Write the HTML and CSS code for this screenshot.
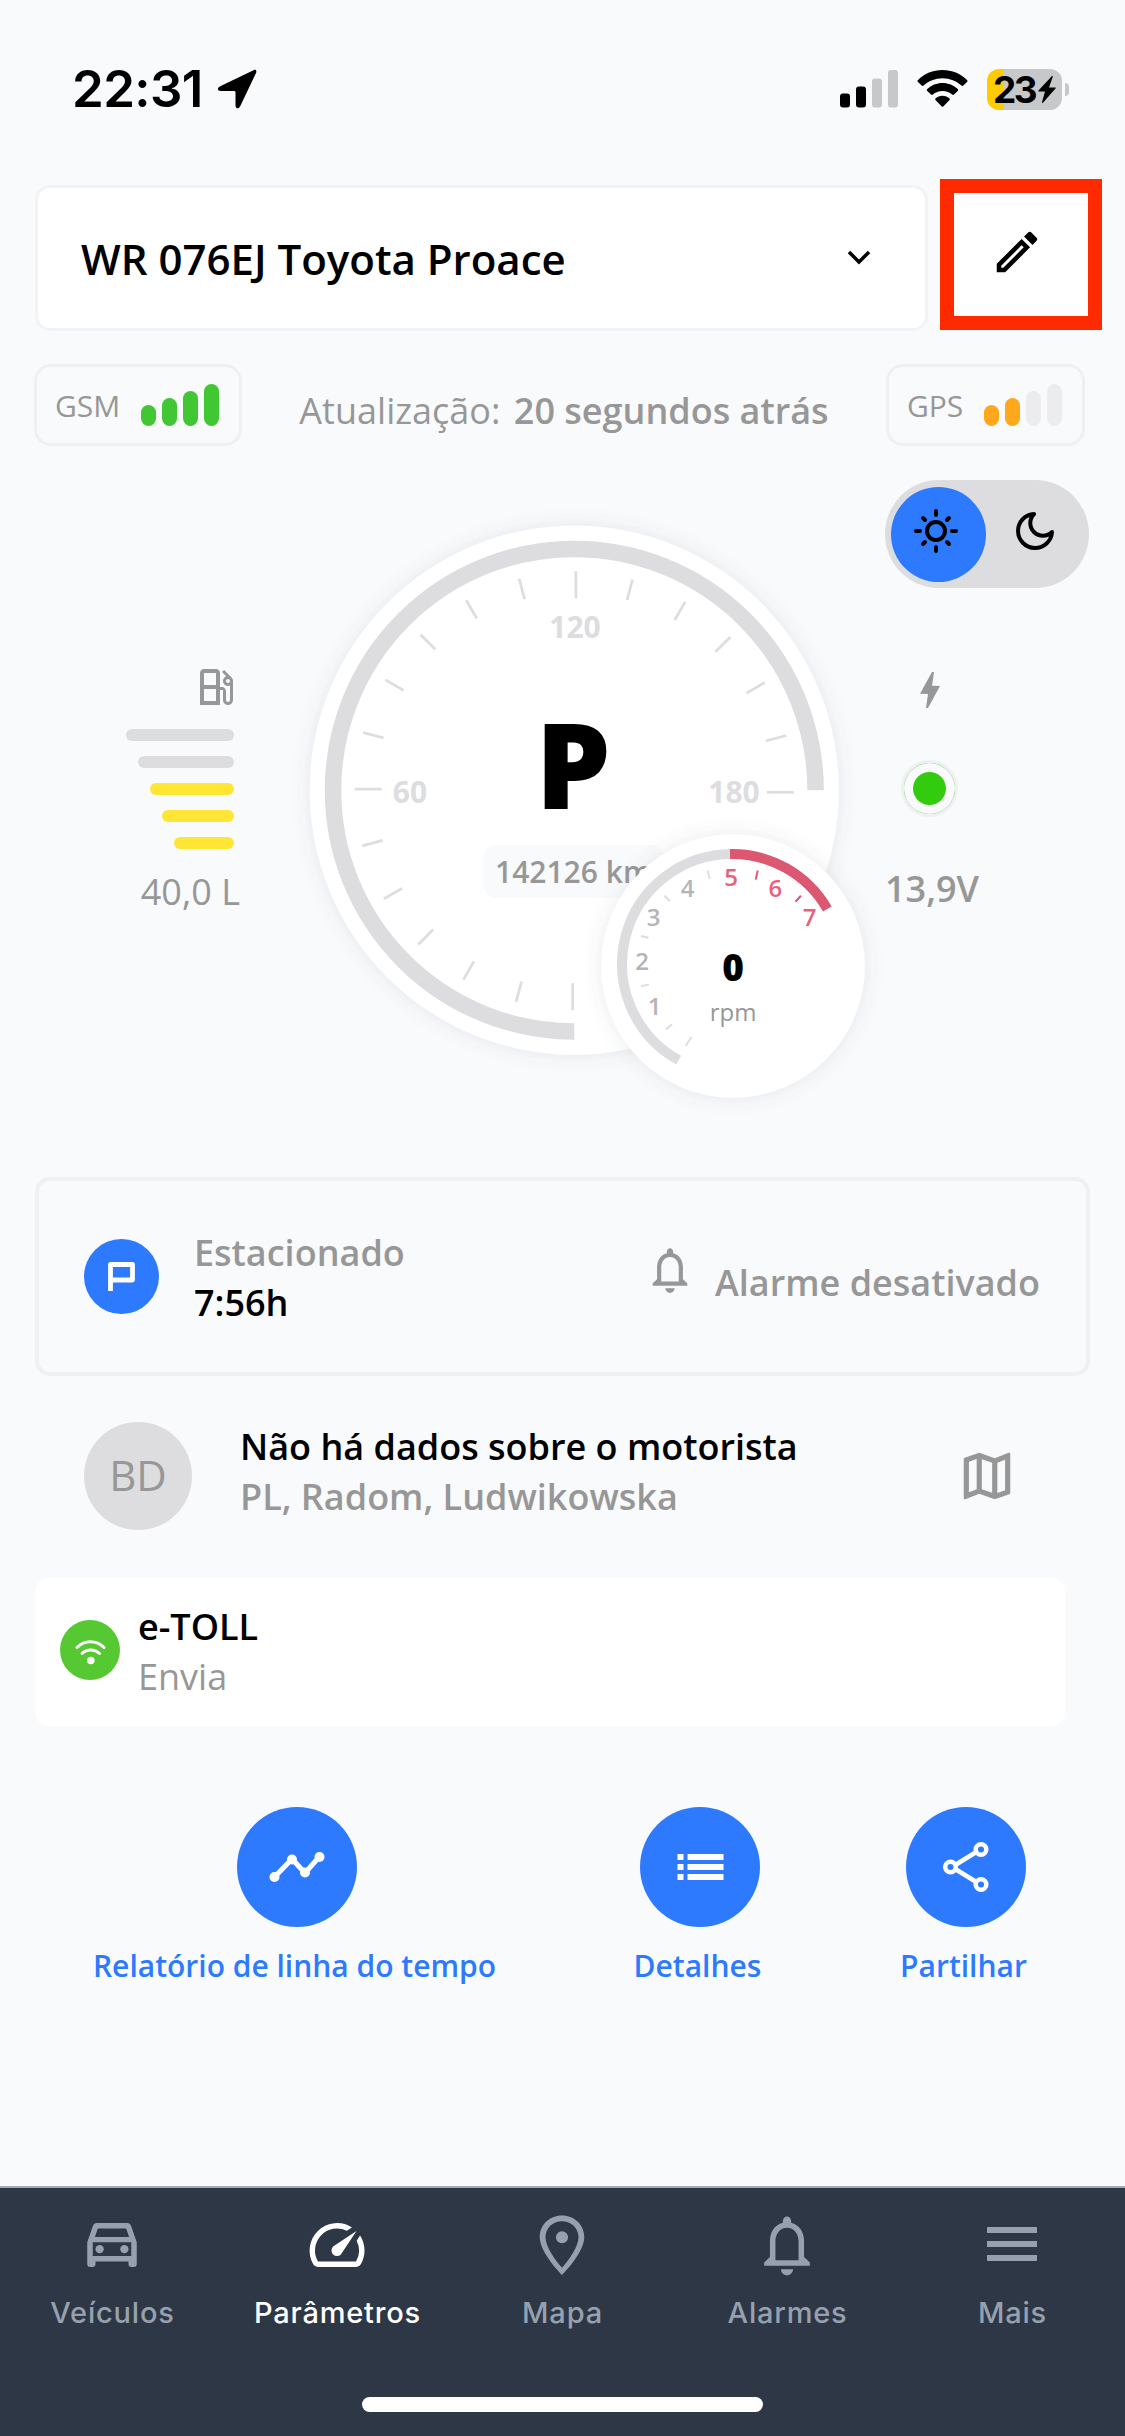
FILE: index.html
```html
<!DOCTYPE html>
<html lang="pt">
<head>
<meta charset="utf-8">
<title>Parâmetros</title>
<link rel="stylesheet" href="styles.css">
</head>
<body>
<div class="screen">
  <header class="status-bar">
    <div class="status-left">
      <span class="clock">22:31</span>
      <svg class="location" viewBox="0 0 40 40"><path d="M36.500 1.200 3.200 17.200c-3.500 1.800-2.700 4.800.500 4.800H17c1 0 1.500.500 1.500 1.500V36c0 4 3.200 4.500 4.800 1L39 4c1-2.500-.200-3.800-2.500-2.800z"/></svg>
    </div>
    <div class="status-right">
      <svg class="cell" viewBox="0 0 58 38"><rect x="0" y="23.500" width="10" height="14" rx="3"/><rect x="16" y="16.500" width="10" height="21" rx="3"/><rect class="dim" x="32" y="8.500" width="10" height="29" rx="3"/><rect class="dim" x="48" y="0" width="10" height="37.500" rx="3"/></svg>
      <svg class="wifi" viewBox="0 0 51 38"><path d="M25.500 0C35 0 43.700 3.700 50 9.900c.700.700.700 1.300 0 2l-3.700 3.700c-.600.600-1.300.600-1.900 0C39.500 11 32.900 8.200 25.500 8.200S11.500 11 6.600 15.600c-.600.600-1.300.600-1.900 0L1 11.900c-.700-.700-.700-1.300 0-2C7.300 3.700 16 0 25.500 0z"/><path d="M25.500 12.900c5.900 0 11.200 2.300 15.200 6 .700.700.700 1.300 0 2L37 24.600c-.600.600-1.200.600-1.900 0-2.500-2.200-5.900-3.600-9.600-3.600s-7.100 1.400-9.600 3.600c-.700.600-1.300.600-1.900 0l-3.700-3.700c-.700-.700-.700-1.300 0-2 4-3.700 9.300-6 15.200-6z"/><path d="M25.500 25.700c2.700 0 5 1 6.800 2.500.700.600.700 1.300 0 2l-5.800 6.100c-.700.700-1.300.700-2 0L18.700 30.200c-.700-.700-.700-1.400 0-2 1.800-1.500 4.100-2.500 6.800-2.500z"/></svg>
      <div class="battery"><div class="battery-body"><span>23</span><svg viewBox="0 0 18 27"><path d="M13.500.500.500 14.500c-.500.600-.300 1.100.500 1.100h6L4 26c-.200 1 .500 1.300 1.200.600L17.500 12.500c.500-.600.300-1.100-.500-1.100h-6L14.700 1.100c.300-1-.500-1.300-1.200-.600z"/></svg></div><i></i></div>
    </div>
  </header>

  <div class="top-row">
    <div class="vehicle-select"><span>WR 076EJ Toyota Proace</span>
      <svg class="chevron" viewBox="0 0 24 16"><path d="m2 3 10 10L22 3"/></svg></div>
    <div class="edit"><svg viewBox="0 0 24 24"><path d="m14.060 9.020.920.920L5.920 19H5v-.920l9.060-9.060M17.660 3c-.250 0-.510.100-.700.290l-1.830 1.830 3.750 3.750 1.830-1.830c.390-.390.390-1.020 0-1.410l-2.340-2.340c-.200-.200-.450-.290-.710-.290zm-3.600 3.190L3 17.250V21h3.750L17.810 9.940l-3.750-3.750z"/></svg></div>
  </div>

  <div class="signal-row">
    <div class="signal green"><span>GSM</span><div class="bars"><i class="b1 on"></i><i class="b2 on"></i><i class="b3 on"></i><i class="b4 on"></i></div></div>
    <div class="update">Atualização: <b>20 segundos atrás</b></div>
    <div class="signal orange"><span>GPS</span><div class="bars"><i class="b1 on"></i><i class="b2 on"></i><i class="b3"></i><i class="b4"></i></div></div>
  </div>

  <main class="dashboard">
    <section class="fuel">
      <svg class="icon48" viewBox="0 0 24 24"><path d="m19.770 7.230.010-.010-3.720-3.720L15 4.560l2.110 2.110c-.940.360-1.610 1.260-1.610 2.330 0 1.380 1.120 2.500 2.500 2.500.360 0 .690-.080 1-.210v7.210c0 .550-.450 1-1 1s-1-.450-1-1V14c0-1.100-.900-2-2-2h-1V5c0-1.100-.900-2-2-2H6c-1.100 0-2 .900-2 2v16h10v-7.500h1.500v5c0 1.380 1.120 2.500 2.500 2.500s2.500-1.120 2.500-2.500V9c0-.690-.280-1.320-.730-1.770zM12 19H6v-6h6v6zm0-8H6V5h6v6zm6-1c-.550 0-1-.450-1-1s.450-1 1-1 1 .450 1 1-.450 1-1 1z"/></svg>
      <div class="levels"><i class="l5"></i><i class="l4"></i><i class="l3 full"></i><i class="l2 full"></i><i class="l1 full"></i></div>
      <span class="reading">40,0 L</span>
    </section>

    <svg class="gauge" viewBox="290 500 600 630">
      <defs>
        <filter id="shade" x="-20%" y="-20%" width="140%" height="140%"><feDropShadow dx="0" dy="0" stdDeviation="9" flood-color="#5a6070" flood-opacity=".13"/></filter>
        <path id="minor" d="M1.600-219V-198"/><path id="major" d="M1.600-219.500V-192.500"/>
      </defs>
      <circle class="face" cx="574.300" cy="790.200" r="264.500"/>
      <path class="track" d="M574.300 1031.500A241.300 241.300 0 1 1 815.600 790.200"/>
      <g class="ticks" transform="translate(574.300 790.700)">
        <use href="#major" transform="rotate(180)"/><use href="#minor" transform="rotate(195)"/><use href="#minor" transform="rotate(210)"/><use href="#minor" transform="rotate(225)"/><use href="#minor" transform="rotate(240)"/><use href="#minor" transform="rotate(255)"/>
        <use href="#major" transform="rotate(270)"/><use href="#minor" transform="rotate(285)"/><use href="#minor" transform="rotate(300)"/><use href="#minor" transform="rotate(315)"/><use href="#minor" transform="rotate(330)"/><use href="#minor" transform="rotate(345)"/>
        <use href="#major"/><use href="#minor" transform="rotate(15)"/><use href="#minor" transform="rotate(30)"/><use href="#minor" transform="rotate(45)"/><use href="#minor" transform="rotate(60)"/><use href="#minor" transform="rotate(75)"/><use href="#major" transform="rotate(90)"/>
      </g>
      <g class="speed"><text x="575" y="638">120</text><text x="410" y="803">60</text><text x="734" y="803">180</text></g>
      <text class="gear" x="573" y="808.500">P</text>
      <rect class="pill" x="483" y="845" width="182" height="53" rx="14"/>
      <text class="odometer" x="495" y="883">142126 km</text>
      <circle class="face" cx="733" cy="966" r="131.800"/>
      <path class="rpm-track" d="M678.700 1060.200A110 110 0 0 1 732 854"/>
      <path class="rpm-track red" d="M730 854A110 110 0 0 1 827.300 909"/>
      <path class="rpm-ticks" d="M691.500 1037l-5.800 8.700M672 1024.300l-6.200 5.200M649 984.400l-8 2M648.600 937.700l-7.600-1.700M670 901.300l-5.700-5.500M709.800 878.800l-2.300-8.300"/>
      <path class="rpm-ticks red" d="M755.700 879.600l2-9.100M795.500 901.700l5.400-5.900"/>
      <g class="rpm-labels"><text x="654.700" y="1015">1</text><text x="642" y="970">2</text><text x="653.600" y="925.500">3</text><text x="687.600" y="896.600">4</text><g class="redline"><text x="731" y="886">5</text><text x="775.300" y="897.400">6</text><text x="809.500" y="925.500">7</text></g></g>
      <text class="rpm" x="733" y="980.500">0</text>
      <text class="unit" x="733" y="1021">rpm</text>
    </svg>

    <section class="power">
      <div class="mode">
        <div class="mode-on"><svg class="sun" viewBox="-24 -24 48 48"><circle r="9"/><path d="M0-20v4M0 16v4M-20 0h4M16 0h4M-13-13l2 2M11 11l2 2M-13 13l2-2M11-11l2-2"/></svg></div>
        <svg class="moon" viewBox="0 0 40 40"><path d="M19 3A17 17 0 1 0 37 21 11.500 11.500 0 0 1 19 3z"/></svg>
      </div>
      <svg class="bolt" viewBox="0 0 20 36"><path d="M14 0 12 13.700l8 .300L8 36H6l2-14-8-.300L12 0z"/></svg>
      <span class="led"></span>
      <span class="reading">13,9V</span>
    </section>
  </main>

  <section class="parking">
    <div class="round-p"><svg viewBox="0 0 27 30"><path d="M2.500 29V2.500h22v15.500H2.500"/></svg></div>
    <div class="two-line"><span class="grey medium">Estacionado</span><span class="medium">7:56h</span></div>
    <svg class="bell" viewBox="0 0 24 24"><use href="#bell-shape"/></svg>
    <span class="alarm grey medium">Alarme desativado</span>
  </section>

  <section class="driver">
    <div class="avatar">BD</div>
    <div class="two-line"><span class="medium">Não há dados sobre o motorista</span><span class="grey medium">PL, Radom, Ludwikowska</span></div>
    <svg class="map" viewBox="0 0 24 24"><path d="M20.500 3l-.160.030L15 5.100 9 3 3.360 4.900c-.210.070-.360.250-.360.480V20.500c0 .280.220.500.500.500l.160-.030L9 18.900l6 2.100 5.640-1.900c.210-.070.360-.250.360-.480V3.500c0-.280-.220-.500-.500-.500zM10 5.470l4 1.400v11.660l-4-1.400V5.470zm-5 .990 3-1.010v11.700l-3 1.160V6.460zm14 11.080-3 1.010V6.860l3-1.160v11.840z"/></svg>
  </section>

  <section class="toll">
    <div class="toll-icon"><svg viewBox="0 0 60 60"><path d="M17 27.500a19 19 0 0 1 27 0M22 33.500a12.500 12.500 0 0 1 17.500 0"/><circle cx="30.800" cy="40.500" r="3.800"/></svg></div>
    <div class="two-line"><span class="medium">e-TOLL</span><span class="grey">Envia</span></div>
  </section>

  <section class="actions">
    <div class="action"><div class="disc"><svg viewBox="0 0 120 120"><path class="thick" d="M37.500 70 55 52l13 14 15-17"/><circle cx="37.500" cy="70" r="5"/><circle cx="55" cy="52.500" r="5"/><circle cx="68" cy="65.500" r="5"/><circle cx="82.500" cy="50" r="5"/></svg></div><span>Relatório de linha do tempo</span></div>
    <div class="action"><div class="disc"><svg viewBox="0 0 120 120"><path d="M37.500 47h6v6h-6zM47.500 47h36v6h-36zM37.500 57h6v6h-6zM47.500 57h36v6h-36zM37.500 67h6v6h-6zM47.500 67h36v6h-36z"/></svg></div><span>Detalhes</span></div>
    <div class="action"><div class="disc"><svg viewBox="0 0 120 120"><g class="outline"><path d="M50 57.500 69.500 45.500M50 62.500l19.500 12"/><circle cx="44.500" cy="60" r="5.300"/><circle cx="75" cy="42.500" r="5.300"/><circle cx="75" cy="77.500" r="5.300"/></g></svg></div><span>Partilhar</span></div>
  </section>

  <nav class="tabs">
    <div class="tab-row">
    <div class="tab"><svg viewBox="0 0 24 24"><path d="M18.920 5.010C18.720 4.420 18.160 4 17.500 4h-11c-.660 0-1.210.420-1.420 1.010L3 11v8c0 .550.450 1 1 1h1c.550 0 1-.450 1-1v-1h12v1c0 .550.450 1 1 1h1c.550 0 1-.450 1-1v-8l-2.080-5.990zM6.850 6h10.290l1.080 3.110H5.770L6.850 6zM19 16H5v-5h14v5z"/><circle cx="7.500" cy="13.500" r="1.500"/><circle cx="16.500" cy="13.500" r="1.500"/></svg><span>Veículos</span></div>
    <div class="tab active"><svg viewBox="0 0 24 24"><path d="m20.380 8.570-1.230 1.850a8 8 0 0 1-.220 7.580H5.070A8 8 0 0 1 15.580 6.850l1.850-1.230A10 10 0 0 0 3.350 19a2 2 0 0 0 1.720 1h13.850a2 2 0 0 0 1.740-1 10 10 0 0 0-.270-10.440z"/><path d="M10.590 15.410a2 2 0 0 0 2.830 0l5.660-8.490-8.490 5.660a2 2 0 0 0 0 2.830z"/></svg><span>Parâmetros</span></div>
    <div class="tab"><svg class="pin" viewBox="0 0 24 24"><path d="M12 1.300C7.400 1.300 3.900 4.800 3.900 9.200c0 5.700 8.100 13.700 8.100 13.700s8.100-8 8.100-13.700c0-4.400-3.500-7.900-8.100-7.900zm0 19c-2.400-2.700-6-7.600-6-11.100 0-3.300 2.600-5.800 6-5.800s6 2.500 6 5.800c0 3.500-3.600 8.400-6 11.100z"/><circle cx="12" cy="9.200" r="2.200"/></svg><span>Mapa</span></div>
    <div class="tab"><svg viewBox="0 0 24 24"><path id="bell-shape" d="M12 23c1.200 0 2.200-1 2.200-2.200H9.800C9.800 22 10.800 23 12 23zm6.200-6.600v-5.800c0-3.300-1.700-6-4.700-6.700v-.700c0-.900-.700-1.600-1.500-1.600s-1.500.700-1.500 1.600v.700c-3 .700-4.700 3.400-4.700 6.700v5.800L3.700 18.400v1.100h16.600v-1.100l-2.100-2zM16.200 17.500H7.800v-6.900c0-2.700 1.700-4.900 4.200-4.900s4.200 2.200 4.200 4.900v6.900z"/></svg><span>Alarmes</span></div>
    <div class="tab"><svg viewBox="0 0 48 48"><path d="M-1 7h50v6H-1zM-1 21h50v6H-1zM-1 35h50v6H-1z"/></svg><span>Mais</span></div>
    </div>
    <div class="home"></div>
  </nav>
</div>
</body>
</html>
```
FILE: styles.css
```css
* { box-sizing: border-box; }
body { margin: 0; background: #f9fafc; color: #000; font-family: "Open Sans", "Noto Sans", sans-serif; }
svg { display: block; flex: none; overflow: visible; }
.screen { width: 1125px; height: 2436px; display: flex; flex-direction: column; background: #f9fafc; overflow: hidden; white-space: nowrap; }

.status-bar { height: 179px; padding: 58px 56px 0 72px; display: flex; justify-content: space-between; align-items: flex-start; }
.status-left, .status-right { display: flex; align-items: center; height: 62px; }
.clock { font: 600 51px/62px Inter, sans-serif; letter-spacing: -.600px; }
.location { width: 40px; height: 40px; margin-left: 14px; }
.cell { width: 58px; height: 38px; }
.cell .dim { fill: #c7c8ca; }
.wifi { width: 51px; height: 38px; margin-left: 19px; }
.battery { display: flex; align-items: center; margin-left: 19px; }
.battery-body { width: 75px; height: 41px; border-radius: 12px; background: linear-gradient(90deg, #ffcc00 17px, #c7c8ca 17px); display: flex; align-items: center; justify-content: center; gap: 2px; font: 700 37px/41px Inter, sans-serif; letter-spacing: -2.500px; }
.battery-body svg { width: 18px; height: 27px; margin-left: 1px; }
.battery > i { width: 4px; height: 13px; margin-left: 3px; border-radius: 0 4px 4px 0; background: #c7c8ca; }

.top-row { display: flex; align-items: flex-start; gap: 12px; padding-left: 35px; height: 151px; }
.vehicle-select { margin-top: 6px; width: 893px; height: 146px; border: 3px solid #f2f3f5; border-radius: 15px; background: #fff; display: flex; align-items: center; justify-content: space-between; padding: 0 54px 0 43px; font-size: 42px; font-weight: 600; }
.chevron { width: 24px; height: 16px; fill: none; stroke: #000; stroke-width: 3.500; margin-top: -3px; }
.edit { width: 162px; height: 151px; border: 14px solid #ff2a00; background: #fff; display: flex; align-items: center; justify-content: center; }
.edit svg { width: 54px; height: 54px; margin: -6px 8px 0 0; }

.signal-row { margin-top: 34px; padding: 0 40px 0 34px; height: 82px; display: flex; justify-content: space-between; }
.signal { height: 82px; border: 3px solid #eff0f2; border-radius: 17px; display: flex; align-items: center; justify-content: space-between; padding: 0 20px 0 18px; color: #979797; font-size: 30px; }
.signal.green { width: 208px; } .signal.orange { width: 199px; }
.bars { display: flex; align-items: flex-end; gap: 6.300px; height: 42px; }
.bars i { width: 14.700px; border-radius: 8px; background: #ececee; }
.green .on { background: #40c733; } .orange .on { background: #ffa81c; }
.b1 { height: 21px; } .b2 { height: 28px; } .b3 { height: 35px; } .b4 { height: 42px; }
.update { font-size: 36px; line-height: 50px; margin-top: 22px; color: #979797; }
.update b { font-weight: 600; margin-left: 4px; }

.dashboard { height: 731px; display: flex; align-items: flex-start; }
.fuel { width: 290px; padding: 217px 50px 0 0; display: flex; flex-direction: column; align-items: flex-end; }
.icon48 { width: 48px; height: 48px; fill: #979797; }
.levels { margin: 18px 6px 0 0; display: flex; flex-direction: column; align-items: flex-end; gap: 15px; }
.levels i { height: 12px; border-radius: 6px; background: #dddddf; }
.levels .full { background: #ffe534; }
.l5 { width: 108px; } .l4 { width: 96px; } .l3 { width: 84px; } .l2 { width: 72px; } .l1 { width: 60px; }
.reading { color: #979797; font-size: 36px; line-height: 50px; }
.fuel .reading { margin-top: 18px; }
.gauge { width: 600px; height: 630px; margin-top: 54px; }
.gauge text { text-anchor: middle; }
.face { fill: #fff; filter: url(#shade); }
.track, .rpm-track, .ticks, .rpm-ticks { fill: none; stroke: #dddddf; }
.track { stroke-width: 16.500px; } .rpm-track { stroke-width: 10px; }
.ticks { stroke-width: 2.700px; } .rpm-ticks { stroke-width: 2px; }
.gauge .red { stroke: #dc5772; }
.speed { fill: #dddddf; font-size: 30px; font-weight: 700; }
.gear { font-size: 119px; font-weight: 800; }
.pill { fill: #f9fafc; }
.gauge .odometer { text-anchor: start; fill: #979797; font-size: 30px; font-weight: 600; }
.rpm-labels { fill: #b5b5b5; font-size: 24px; font-weight: 600; }
.redline { fill: #eb5f7b; }
.rpm { font-size: 37px; font-weight: 800; }
.unit { font-size: 24px; fill: #979797; }
.power { width: 235px; padding: 34px 36px 0 0; margin-left: -5px; display: flex; flex-direction: column; align-items: flex-start; }
.mode { width: 204px; height: 108px; border-radius: 54px; background: #dddddf; display: flex; align-items: center; padding-left: 6px; }
.mode-on { width: 95px; height: 95px; border-radius: 50%; background: #2e7aff; display: flex; align-items: center; justify-content: center; }
.sun { width: 48px; height: 48px; margin: -6px 6px 0 0; fill: none; stroke: #000; stroke-width: 4; stroke-linecap: round; }
.moon { width: 40px; height: 40px; margin: -6px 0 0 29px; fill: none; stroke: #000; stroke-width: 4; stroke-linejoin: round; }
.bolt { width: 20px; height: 36px; margin: 84px 0 0 35px; fill: #979797; }
.led { width: 57px; height: 57px; border-radius: 50%; margin: 52px 0 0 16px; background: #33cb0e; border: 3px solid #eff0f2; box-shadow: inset 0 0 0 9px #f9fafc; }
.power .reading { margin-top: 47px; font-weight: 600; }

.parking { margin: 0 35px; height: 199px; border: 4px solid #eff0f2; border-radius: 15px; display: flex; align-items: flex-start; padding: 0 46px 0 45px; }
.round-p { width: 75px; height: 75px; border-radius: 50%; background: #2e7aff; margin-top: 58px; display: flex; align-items: center; justify-content: center; }
.round-p svg { width: 27px; height: 30px; fill: none; stroke: #fff; stroke-width: 4.800; stroke-linejoin: round; }
.two-line { display: flex; flex-direction: column; font-size: 36px; line-height: 50px; }
.grey { color: #979797; } .medium { font-weight: 600; }
.parking .two-line { margin: 47px 0 0 35px; }
.bell { width: 50px; height: 50px; margin: 64px 0 0 auto; fill: #979797; }
.alarm { font-size: 36px; line-height: 50px; margin: 77px 0 0 20px; }
.driver { height: 202px; padding: 46px 107px 0 84px; display: flex; }
.avatar { width: 108px; height: 108px; border-radius: 50%; background: #dddddf; color: #979797; font-size: 42px; line-height: 105px; text-align: center; }
.driver .two-line { margin: 0 auto 0 48px; }
.map { width: 62px; height: 62px; margin-top: 23px; fill: #979797; }
.toll { margin-left: 35px; width: 1030px; height: 148px; background: #fff; border-radius: 14px; display: flex; padding-left: 25px; }
.toll-icon { width: 60px; height: 60px; border-radius: 50%; background: #55c832; margin-top: 42px; }
.toll-icon svg { width: 60px; height: 60px; fill: #fff; }
.toll-icon path { fill: none; stroke: #fff; stroke-width: 3; stroke-linecap: round; }
.toll .two-line { margin: 24px 0 0 18px; }
.actions { margin: 81px 0 0 94px; display: flex; align-items: flex-start; height: 379px; }
.action { display: flex; flex-direction: column; align-items: center; color: #2e7aff; font-size: 30px; font-weight: 600; line-height: 42px; width: 406px; }
.action span { margin-right: 5px; }
.action:nth-child(2) { margin-left: 97px; width: 206px; }
.action:nth-child(3) { margin-left: 60px; width: 206px; }
.disc { width: 120px; height: 120px; border-radius: 50%; background: #2e7aff; margin-bottom: 18px; }
.disc svg { width: 120px; height: 120px; fill: #fff; }
.thick { fill: none; stroke: #fff; stroke-width: 5; }
.outline { fill: none; stroke: #fff; stroke-width: 4.500; }

.tabs { height: 250px; background: #2e3746; border-top: 2px solid #a9aaad; color: #97a1ae; }
.tab-row { display: flex; height: 210px; }
.tab { flex: 1; display: flex; flex-direction: column; align-items: center; padding-top: 24px; font: 500 29px/36px Inter, sans-serif; letter-spacing: .800px; }
.tab svg { width: 66px; height: 66px; margin-right: 2px; fill: #97a1ae; }
.tab span { margin-top: 17px; }
.tab.active { color: #fff; } .tab.active svg { fill: #fff; }
.tab:last-child svg { width: 48px; height: 48px; margin: 8px 2px 10px 0; }
.home { width: 401px; height: 15px; border-radius: 8px; background: #fff; margin: -1px auto 0; }
```
